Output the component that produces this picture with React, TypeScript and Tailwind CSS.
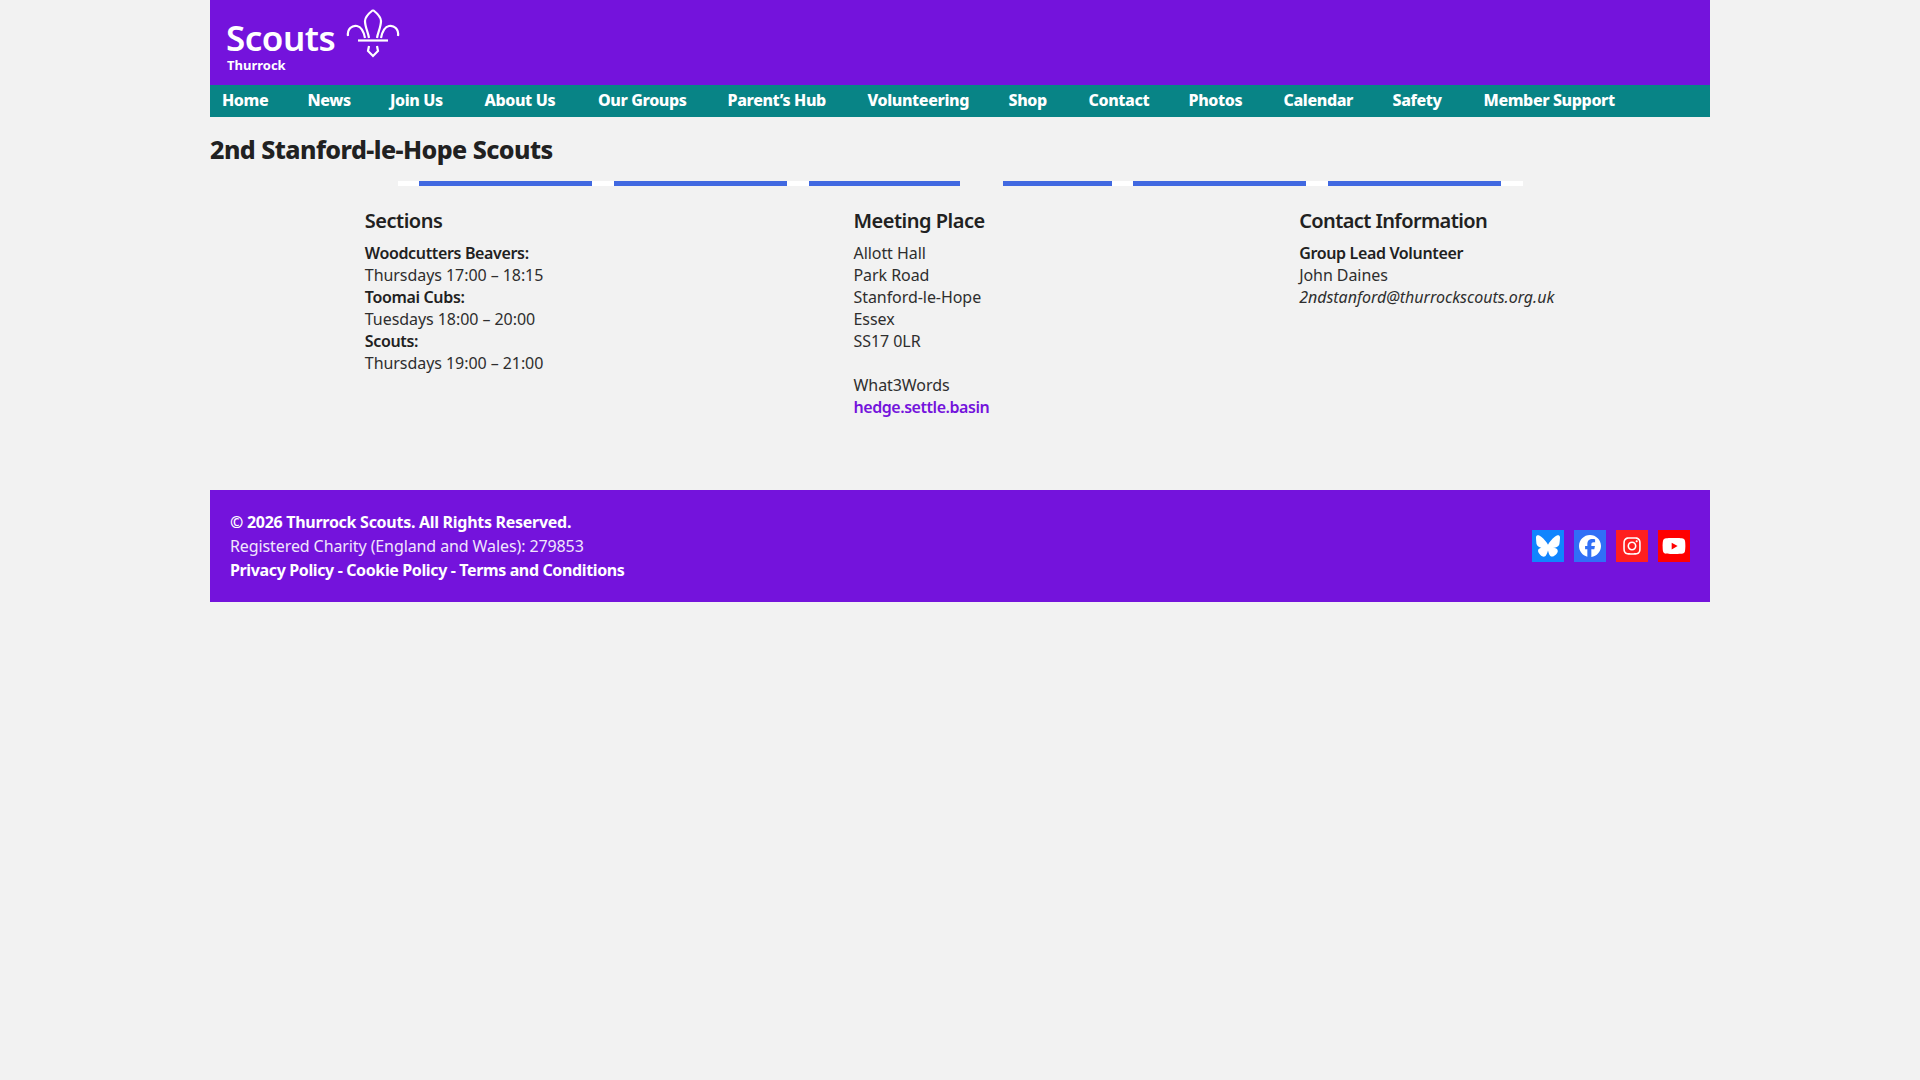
import { FaBluesky, FaFacebook, FaInstagram, FaYoutube } from "react-icons/fa6";

const navItems = [
  { label: "Home", width: "w-[85.5px]" },
  { label: "News", width: "w-[82.5px]" },
  { label: "Join Us", width: "w-[94.5px]" },
  { label: "About Us", width: "w-[113.5px]" },
  { label: "Our Groups", width: "w-[129.5px]" },
  { label: "Parent’s Hub", width: "w-[140px]" },
  { label: "Volunteering", width: "w-[141px]" },
  { label: "Shop", width: "w-[80px]" },
  { label: "Contact", width: "w-[100px]" },
  { label: "Photos", width: "w-[95px]" },
  { label: "Calendar", width: "w-[109px]" },
  { label: "Safety", width: "w-[91px]" },
  { label: "Member Support", width: "w-[190px]" },
];

const bars = [
  { color: "bg-white", width: "w-[21px]" },
  { color: "bg-[#4169e1]", width: "w-[173px]" },
  { color: "bg-white", width: "w-[22px]" },
  { color: "bg-[#4169e1]", width: "w-[173px]" },
  { color: "bg-white", width: "w-[22px]" },
  { color: "bg-[#4169e1]", width: "w-[151px]" },
  { color: "bg-transparent", width: "w-[43px]" },
  { color: "bg-[#4169e1]", width: "w-[109px]" },
  { color: "bg-white", width: "w-[21px]" },
  { color: "bg-[#4169e1]", width: "w-[173px]" },
  { color: "bg-white", width: "w-[22px]" },
  { color: "bg-[#4169e1]", width: "w-[173px]" },
  { color: "bg-white", width: "w-[22px]" },
];

function ScoutsLogo() {
  return (
    <div className="flex flex-col pl-[16px]">
      <div className="flex items-start">
        <span className="mt-[20px] w-[119px] text-[35px] leading-[36px] font-semibold tracking-[-0.5px] text-white">Scouts</span>
        <svg className="mt-[8px]" width="56" height="50" viewBox="0 0 56 50" fill="none" stroke="white" strokeWidth="2.2">
          <path d="M28 2 C23 6 20 9 20 13 C20 19 23 24 24 30 M28 2 C33 6 36 9 36 13 C36 19 33 24 32 30" />
          <path d="M3 28 C2 21 7 17 12 18 C17 19 19 25 20 30 M53 28 C54 21 49 17 44 18 C39 19 37 25 36 30" />
          <path d="M13 32.5 H43" />
          <path d="M24 38 L23 43 L28 48 L33 43 L32 38" />
        </svg>
      </div>
      <span className="mt-[-2px] pl-[1px] text-[13px] leading-[18px] font-bold text-white">Thurrock</span>
    </div>
  );
}

export default function App() {
  return (
    <div className="min-h-screen bg-[#f2f2f2] font-['Noto_Sans',sans-serif] text-[16px] text-[#212121]">
      <div className="mx-auto w-[1500px]">
        <header className="h-[85px] overflow-hidden bg-[#7413dc]">
          <ScoutsLogo />
        </header>
        <nav className="flex h-[32px] items-center bg-[#088486] pb-[2px] pl-[12px]">
          {navItems.map((item) => (
            <a key={item.label} className={`${item.width} shrink-0 text-[16px] font-extrabold tracking-[-0.38px] text-white`}>
              {item.label}
            </a>
          ))}
        </nav>

        <h1 className="mt-[16px] h-[32px] text-[25px] leading-[32px] font-extrabold tracking-[-0.55px]">2nd Stanford-le-Hope Scouts</h1>

        <div className="mt-[16px] ml-[188px] flex h-[5px]">
          {bars.map((bar, i) => (
            <div key={i} className={`${bar.color} ${bar.width} h-full`} />
          ))}
        </div>

        <div className="mt-[21px] flex justify-around">
          <div className="w-[179px]">
            <h3 className="mb-[7px] text-[20px] leading-[28px] font-semibold tracking-[-0.5px]">Sections</h3>
            <div className="leading-[22px] tracking-[-0.06px] text-[#2e2e2e]">
              <div className="font-semibold tracking-[-0.35px] text-[#212121]">Woodcutters Beavers:</div>
              <div>Thursdays 17:00 – 18:15</div>
              <div className="font-semibold tracking-[-0.35px] text-[#212121]">Toomai Cubs:</div>
              <div>Tuesdays 18:00 – 20:00</div>
              <div className="font-semibold tracking-[-0.35px] text-[#212121]">Scouts:</div>
              <div>Thursdays 19:00 – 21:00</div>
            </div>
          </div>
          <div className="w-[136px]">
            <h3 className="mb-[7px] text-[20px] leading-[28px] font-semibold tracking-[-0.5px]">Meeting Place</h3>
            <div className="leading-[22px] tracking-[-0.06px] text-[#2e2e2e]">
              <div>Allott Hall</div>
              <div>Park Road</div>
              <div>Stanford-le-Hope</div>
              <div>Essex</div>
              <div>SS17 0LR</div>
              <div className="h-[22px]" />
              <div>What3Words</div>
              <a className="font-semibold tracking-[-0.45px] text-[#7413dc]">hedge.settle.basin</a>
            </div>
          </div>
          <div className="w-[256px]">
            <h3 className="mb-[7px] text-[20px] leading-[28px] font-semibold tracking-[-0.6px]">Contact Information</h3>
            <div className="leading-[22px] tracking-[-0.06px] text-[#2e2e2e]">
              <div className="font-semibold tracking-[-0.35px] text-[#212121]">Group Lead Volunteer</div>
              <div>John Daines</div>
              <div className="italic tracking-[-0.02px]">2ndstanford@thurrockscouts.org.uk</div>
            </div>
          </div>
        </div>

        <footer className="mt-[72px] flex h-[112px] items-center justify-between bg-[#7413dc] px-[20px] text-white">
          <div className="leading-[24px]">
            <div className="font-bold tracking-[-0.28px]">© 2026 Thurrock Scouts. All Rights Reserved.</div>
            <div className="tracking-[-0.1px] text-[#f1e6fc]">Registered Charity (England and Wales): 279853</div>
            <div className="font-bold tracking-[-0.37px]">Privacy Policy - Cookie Policy - Terms and Conditions</div>
          </div>
          <div className="flex gap-[10px]">
            <a className="flex h-[32px] w-[32px] items-center justify-center bg-[#1185fe]">
              <FaBluesky size={24} />
            </a>
            <a className="flex h-[32px] w-[32px] items-center justify-center bg-[#316ff6]">
              <FaFacebook size={22} />
            </a>
            <a className="flex h-[32px] w-[32px] items-center justify-center bg-[#ff1f1f]">
              <FaInstagram size={20} />
            </a>
            <a className="flex h-[32px] w-[32px] items-center justify-center bg-[#ff0000]">
              <FaYoutube size={24} />
            </a>
          </div>
        </footer>
      </div>
    </div>
  );
}
